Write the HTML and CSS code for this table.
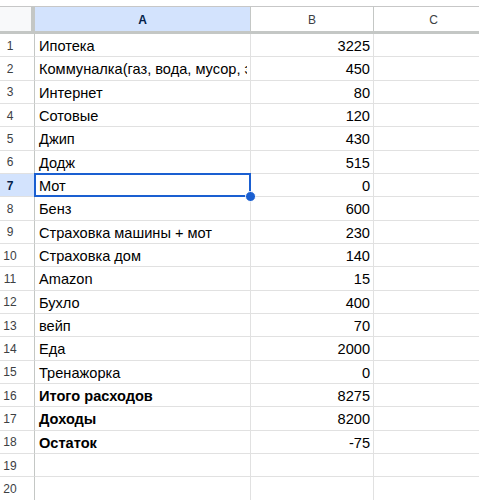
FILE: index.html
```html
<!DOCTYPE html>
<html lang="ru">
<head>
<meta charset="utf-8">
<title>Sheet</title>
<link rel="stylesheet" href="styles.css">
</head>
<body>
<div class="sheet">
  <div class="hdr corner"></div>
  <div class="hdr col sel">A</div>
  <div class="hdr col">B</div>
  <div class="hdr col last">C</div>

  <div class="rn">1</div><div class="c">Ипотека</div><div class="c n">3225</div><div class="c last"></div>
  <div class="rn">2</div><div class="c"><span class="clip">Коммуналка(газ, вода, мусор, электричество)</span></div><div class="c n">450</div><div class="c last"></div>
  <div class="rn">3</div><div class="c">Интернет</div><div class="c n">80</div><div class="c last"></div>
  <div class="rn">4</div><div class="c">Сотовые</div><div class="c n">120</div><div class="c last"></div>
  <div class="rn">5</div><div class="c">Джип</div><div class="c n">430</div><div class="c last"></div>
  <div class="rn">6</div><div class="c">Додж</div><div class="c n">515</div><div class="c last"></div>
  <div class="rn rsel">7</div><div class="c active">Мот</div><div class="c n">0</div><div class="c last"></div>
  <div class="rn">8</div><div class="c">Бенз</div><div class="c n">600</div><div class="c last"></div>
  <div class="rn">9</div><div class="c">Страховка машины + мот</div><div class="c n">230</div><div class="c last"></div>
  <div class="rn">10</div><div class="c">Страховка дом</div><div class="c n">140</div><div class="c last"></div>
  <div class="rn">11</div><div class="c">Amazon</div><div class="c n">15</div><div class="c last"></div>
  <div class="rn">12</div><div class="c">Бухло</div><div class="c n">400</div><div class="c last"></div>
  <div class="rn">13</div><div class="c">вейп</div><div class="c n">70</div><div class="c last"></div>
  <div class="rn">14</div><div class="c">Еда</div><div class="c n">2000</div><div class="c last"></div>
  <div class="rn">15</div><div class="c">Тренажорка</div><div class="c n">0</div><div class="c last"></div>
  <div class="rn">16</div><div class="c b">Итого расходов</div><div class="c n">8275</div><div class="c last"></div>
  <div class="rn">17</div><div class="c b">Доходы</div><div class="c n">8200</div><div class="c last"></div>
  <div class="rn">18</div><div class="c b">Остаток</div><div class="c n">-75</div><div class="c last"></div>
  <div class="rn">19</div><div class="c"></div><div class="c n"></div><div class="c last"></div>
  <div class="rn">20</div><div class="c"></div><div class="c n"></div><div class="c last"></div>
</div>
</body>
</html>
```

FILE: styles.css
```css
html, body {
  margin: 0;
  padding: 0;
  background: #fff;
  overflow: hidden;
}
body {
  font-family: "Liberation Sans", Arial, sans-serif;
  color: #000;
}
.sheet {
  margin-top: 6px;
  display: grid;
  grid-template-columns: 35px 216px 123px 120px;
  grid-template-rows: 28px;
  grid-auto-rows: 23.34px;
  width: 479px;
  overflow: hidden;
}
.hdr {
  box-sizing: border-box;
  border-top: 1px solid #c7c7c7;
  border-bottom: 3px solid #c4c7c5;
  background: #fff;
  font-size: 12px;
  color: #3c4043;
  display: flex;
  align-items: center;
  justify-content: center;
  padding-top: 1px;
}
.corner {
  background: #f8f9fa;
  border-right: 4px solid #c4c7c5;
}
.col {
  border-right: 1px solid #c4c7c5;
}
.col.sel {
  background: #d3e3fd;
  color: #041e49;
  font-weight: bold;
}
.rn {
  box-sizing: border-box;
  border-right: 1px solid #c4c7c5;
  border-bottom: 1px solid #e1e1e1;
  font-size: 12px;
  color: #3c4043;
  padding: 1px 14px 0 0;
  display: flex;
  align-items: center;
  justify-content: center;
}
.rn.rsel {
  background: #d3e3fd;
  color: #041e49;
  font-weight: bold;
}
.c {
  box-sizing: border-box;
  border-right: 1px solid #e1e1e1;
  border-bottom: 1px solid #e1e1e1;
  font-size: 14.6px;
  padding: 2px 3px 0 4px;
  display: flex;
  align-items: center;
  white-space: nowrap;
  overflow: hidden;
  position: relative;
}
.clip {
  display: block;
  max-width: 100%;
  overflow: hidden;
}
.c.n {
  justify-content: flex-end;
}
.c.b {
  font-weight: bold;
}
.c.active {
  overflow: visible;
  z-index: 2;
}
.c.active::before {
  content: "";
  position: absolute;
  left: -1px;
  top: -1px;
  right: -1px;
  bottom: -1px;
  border: 2px solid #1a5fd1;
}
.c.active::after {
  content: "";
  position: absolute;
  right: -6px;
  bottom: -6px;
  width: 11px;
  height: 11px;
  border-radius: 50%;
  background: #1a5fd1;
  border: 1px solid #fff;
  box-sizing: border-box;
}
```
